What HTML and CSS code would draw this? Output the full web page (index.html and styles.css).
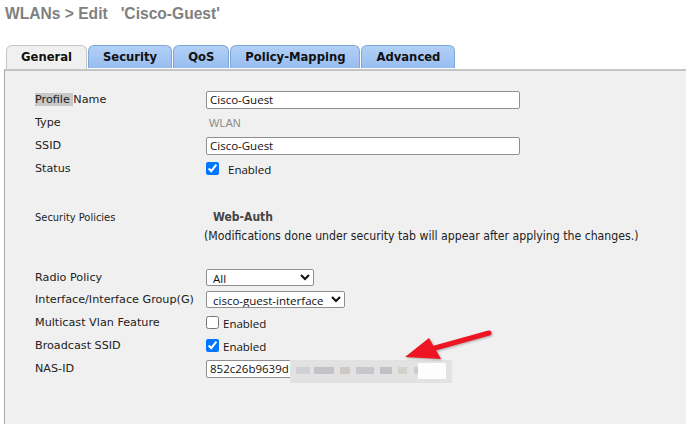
FILE: index.html
```html
<!DOCTYPE html>
<html lang="en">
  <head>
    <meta charset="UTF-8" />
    <title>WLANs &gt; Edit</title>
    <link rel="stylesheet" href="styles.css">
  </head>
  <body>
    <h1 id="page-title">WLANs &gt; Edit &nbsp;&nbsp;'Cisco-Guest'</h1>

    <div id="tabs">
      <div class="tab active">General</div>
      <div class="tab">Security</div>
      <div class="tab">QoS</div>
      <div class="tab">Policy-Mapping</div>
      <div class="tab">Advanced</div>
    </div>

    <div id="panel">
      <div class="form">
        <div class="label"><span class="picked">Profile </span>Name</div>
        <div class="value"><input type="text" class="text-input wide" value="Cisco-Guest" /></div>

        <div class="label">Type</div>
        <div class="value plain">WLAN</div>

        <div class="label">SSID</div>
        <div class="value"><input type="text" class="text-input wide" value="Cisco-Guest" /></div>

        <div class="label">Status</div>
        <div class="value"><input type="checkbox" class="check spaced" checked /><span class="check-text">Enabled</span></div>

        <div class="label narrow gap-top">Security Policies</div>
        <div class="value gap-top"><span class="policy">Web-Auth</span></div>
        <div class="label"></div>
        <div class="value note">(Modifications done under security tab will appear after applying the changes.)</div>

        <div class="label gap-top2">Radio Policy</div>
        <div class="value gap-top2">
          <select class="select radio">
            <option>All</option>
          </select>
        </div>

        <div class="label">Interface/Interface Group(G)</div>
        <div class="value">
          <select class="select iface">
            <option>cisco-guest-interface</option>
          </select>
        </div>

        <div class="label">Multicast Vlan Feature</div>
        <div class="value"><input type="checkbox" class="check" /><span class="check-text">Enabled</span></div>

        <div class="label">Broadcast SSID</div>
        <div class="value"><input type="checkbox" class="check" checked /><span class="check-text">Enabled</span></div>

        <div class="label">NAS-ID</div>
        <div class="value nas">
          <input type="text" class="text-input nas-input" value="852c26b9639d" />
          <!-- hidden part of the id -->
          <div class="masked">
            <span class="px" style="left: 6px; width: 14px; background: #c9cbd2"></span>
            <span class="px" style="left: 24px; width: 20px; background: #b9b6bd"></span>
            <span class="px" style="left: 50px; width: 10px; background: #c6c0bd"></span>
            <span class="px" style="left: 66px; width: 18px; background: #bdbcc6"></span>
            <span class="px" style="left: 90px; width: 12px; background: #b7b4bb"></span>
            <span class="px" style="left: 108px; width: 9px; background: #cfcac4"></span>
            <span class="px" style="left: 124px; width: 8px; background: #c3c6ce"></span>
            <span class="white-end"></span>
          </div>
          <svg class="arrow" width="100" height="40" viewBox="0 0 100 40">
            <path d="M92 4 L38 19" stroke="#ee1522" stroke-width="5" stroke-linecap="round" fill="none" />
            <path d="M8 28 L32 9 L44 30 Z" fill="#ee1522" />
          </svg>
        </div>
      </div>
    </div>
  </body>
</html>
```

FILE: styles.css
```css
body {
  margin: 0;
  background: #ffffff;
  font-family: "DejaVu Sans", Verdana, sans-serif;
  font-size: 11px;
  color: #222;
}
#page-title {
  margin: 0;
  padding: 5px 0 0 5px;
  height: 38px;
  box-sizing: border-box;
  font-family: "Liberation Sans", Arial, sans-serif;
  font-size: 15.6px;
  font-weight: bold;
  color: #808080;
}
#tabs {
  display: flex;
  gap: 1px;
  padding-left: 6px;
  margin-top: 7px;
}
.tab {
  height: 22px;
  line-height: 22px;
  padding: 0 14px;
  border: 1px solid #7ea6d8;
  border-bottom: none;
  border-radius: 6px 6px 0 0;
  background: linear-gradient(#b2d0f6, #97bdf0);
  font-family: "DejaVu Sans", Verdana, sans-serif;
  font-weight: bold;
  font-size: 11.6px;
  color: #111;
}
.tab.active {
  background: #f0f0f0;
  border-color: #c4c4c4;
  position: relative;
  z-index: 1;
  height: 23px;
}
#panel {
  margin: 0 10px 10px 4px;
  height: 355px;
  background: #f0f0f0;
  border-top: 2px solid #c4c4c4;
  border-left: 1px solid #a8a8a8;
  box-sizing: border-box;
  padding: 17px 0 0 30px;
}
.form {
  display: grid;
  grid-template-columns: 171px 1fr;
  grid-auto-rows: minmax(23px, auto);
  align-items: center;
}
.label {
  color: #222;
  font-size: 11.2px;
}
.label.narrow {
  font-family: "DejaVu Sans Condensed", "DejaVu Sans", sans-serif;
  font-size: 11px;
}
.picked {
  background: #c8c8c8;
}
.value {
  display: flex;
  align-items: center;
}
.value.plain {
  padding-left: 3px;
  color: #8a8a8a;
  font-family: "Liberation Sans", Arial, sans-serif;
  font-size: 11px;
}
.text-input {
  box-sizing: border-box;
  height: 18px;
  padding: 0 3px;
  border: 1px solid #8f8f8f;
  border-radius: 2px;
  background: #fff;
  font-family: "Open Sans", sans-serif;
  font-size: 11.5px;
  color: #111;
  outline: none;
}
.text-input.wide {
  width: 314px;
}
.check {
  width: 13px;
  height: 13px;
  margin: 0 4px 0 0;
  accent-color: #0075ff;
}
.check.spaced {
  margin-right: 9px;
}
.check-text {
  font-family: "Open Sans", sans-serif;
  font-size: 11.5px;
  color: #111;
  padding-top: 2px;
}
.gap-top {
  margin-top: 30px;
}
.policy {
  padding-left: 7px;
  font-family: "DejaVu Sans Condensed", "DejaVu Sans", sans-serif;
  font-size: 12px;
  font-weight: bold;
  color: #444;
}
.note {
  margin-left: -2px;
  font-family: "DejaVu Sans Condensed", "DejaVu Sans", sans-serif;
  font-size: 12.2px;
  color: #222;
  line-height: 13px;
  padding-top: 2px;
}
.gap-top2 {
  margin-top: 22px;
  margin-bottom: 2px;
}
.select {
  height: 17px;
  padding: 0 0 0 2px;
  border: 1px solid #8f8f8f;
  border-radius: 2px;
  background: #fff;
  font-family: "Open Sans", sans-serif;
  font-size: 11.5px;
  color: #111;
}
.select.radio {
  width: 108px;
}
.select.iface {
  width: 139px;
}
.nas {
  position: relative;
}
.nas-input {
  width: 246px;
}
.masked {
  position: absolute;
  left: 84px;
  top: 0;
  width: 162px;
  height: 23px;
  background: #e2e2e2;
  filter: blur(0.6px);
}
.masked .px {
  position: absolute;
  top: 7px;
  height: 7px;
  opacity: 0.75;
}
.white-end {
  position: absolute;
  right: 6px;
  top: 3px;
  width: 28px;
  height: 16px;
  background: #fdfdfd;
}
.arrow {
  position: absolute;
  left: 191px;
  top: -31px;
  filter: drop-shadow(1px 1px 1px rgba(0, 0, 0, 0.3));
}
```
